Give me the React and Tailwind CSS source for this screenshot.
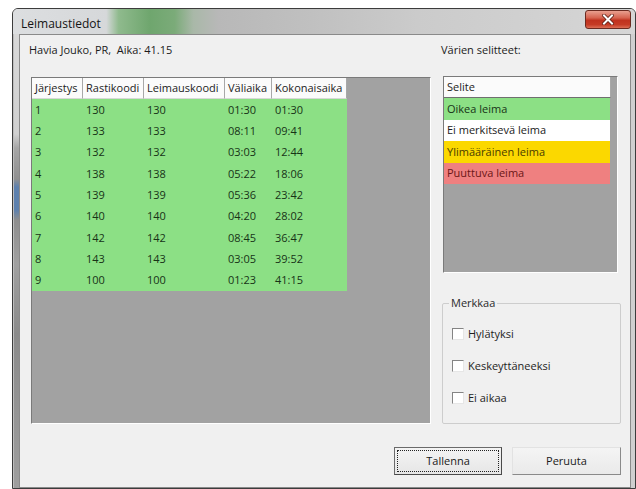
import React from "react";

const rows = [
  ["1", "130", "130", "01:30", "01:30"],
  ["2", "133", "133", "08:11", "09:41"],
  ["3", "132", "132", "03:03", "12:44"],
  ["4", "138", "138", "05:22", "18:06"],
  ["5", "139", "139", "05:36", "23:42"],
  ["6", "140", "140", "04:20", "28:02"],
  ["7", "142", "142", "08:45", "36:47"],
  ["8", "143", "143", "03:05", "39:52"],
  ["9", "100", "100", "01:23", "41:15"],
];

const columns = [
  { title: "Järjestys", w: "w-[51px]" },
  { title: "Rastikoodi", w: "w-[61px]" },
  { title: "Leimauskoodi", w: "w-[81px]" },
  { title: "Väliaika", w: "w-[47px]" },
  { title: "Kokonaisaika", w: "w-[75px]" },
];

const legend = [
  { label: "Oikea leima", cls: "bg-[#8ce085] text-[#173317]" },
  { label: "Ei merkitsevä leima", cls: "bg-white text-[#1a1a1a]" },
  { label: "Ylimääräinen leima", cls: "bg-[#fbd800] text-[#4a3c00]" },
  { label: "Puuttuva leima", cls: "bg-[#ef8080] text-[#6b1616]" },
];

function CloseButton() {
  return (
    <div className="mt-[1px] mr-[4px] w-[46px] h-[19px] rounded-[3px] border border-[#6b2a20] bg-[linear-gradient(180deg,#e9a090_0%,#d66450_40%,#c0321f_55%,#c53b25_80%,#dc6d55_100%)] flex items-center justify-center">
      <svg width="12" height="11" viewBox="0 0 12 11">
        <path d="M2 1.5 L10 9.5 M10 1.5 L2 9.5" stroke="#5a1c12" strokeWidth="3.6" strokeLinecap="square" />
        <path d="M2 1.5 L10 9.5 M10 1.5 L2 9.5" stroke="#ffffff" strokeWidth="2" strokeLinecap="square" />
      </svg>
    </div>
  );
}

function DataGrid() {
  return (
    <div className="w-[400px] h-[347px] border border-t-[#7a7a7a] border-l-[#7a7a7a] border-b-white border-r-white bg-[#a2a2a2]">
      <div className="flex h-[21px]">
        {columns.map((c) => (
          <div
            key={c.title}
            className={`${c.w} h-full bg-[#fbfbfb] border-r border-b border-r-[#a8a8a8] border-b-[#d8d8d8] pl-[3px] flex items-center text-[#1b1b1b] whitespace-nowrap overflow-hidden`}
          >
            {c.title}
          </div>
        ))}
      </div>
      <div className="w-[315px] h-[192px] grid grid-rows-9 bg-[#8ce085]">
        {rows.map((r) => (
          <div key={r[0]} className="flex items-center text-[#173317]">
            {r.map((v, i) => (
              <div key={i} className={`${columns[i].w} pl-[3px]`}>
                {v}
              </div>
            ))}
          </div>
        ))}
      </div>
    </div>
  );
}

function Legend() {
  return (
    <div className="ml-[2px] mt-[18px] w-[175px] h-[197px] border border-t-[#7a7a7a] border-l-[#7a7a7a] border-b-white border-r-white bg-[#a2a2a2]">
      <div className="w-[167px] h-[21px] bg-[#fbfbfb] border-r border-b border-r-[#a8a8a8] border-b-[#6f6f6f] pl-[3px] flex items-center text-[#1b1b1b]">
        Selite
      </div>
      {legend.map((l) => (
        <div key={l.label} className={`w-[166px] h-[21.5px] pl-[3px] flex items-center ${l.cls}`}>
          {l.label}
        </div>
      ))}
    </div>
  );
}

function CheckRow({ label }) {
  return (
    <div className="h-[16px] flex items-center">
      <div className="w-[12px] h-[12px] bg-white border border-t-[#848484] border-l-[#848484] border-b-[#e6e6e6] border-r-[#e6e6e6]" />
      <span className="ml-[4px] text-[#1e1e1e]">{label}</span>
    </div>
  );
}

function MarkGroup() {
  return (
    <fieldset className="ml-[1px] mt-[22px] w-[179px] h-[129px] border border-[#cdcdcd] rounded-[2px] pl-[9px]">
      <legend className="ml-[-3px] px-[2px] leading-[16px] text-[#2a2a2a]">Merkkaa</legend>
      <div className="pt-[15px] flex flex-col gap-[16px]">
        <CheckRow label="Hylätyksi" />
        <CheckRow label="Keskeyttäneeksi" />
        <CheckRow label="Ei aikaa" />
      </div>
    </fieldset>
  );
}

export default function App() {
  return (
    <div
      className="w-[636px] h-[489px] bg-white pt-[8px] pl-[12px] overflow-hidden text-[11px] leading-[16px]"
      style={{ fontFamily: '"Open Sans", "Noto Sans", sans-serif' }}
    >
      <div className="w-[624px] h-[481px] border border-[#3c3c3c] rounded-t-[6px] flex flex-col bg-[#d3d3d3] overflow-hidden">
        {/* title bar */}
        <div className="h-[25px] shrink-0 flex items-start justify-between bg-[linear-gradient(90deg,#dcdee0_0%,#d6d8da_15%,#8fba8d_17%,#6fa66e_22%,#7bab79_26%,#a9b8a8_29%,#b8b8b8_33%,#c0c0c0_48%,#cbcbcb_65%,#d6d6d6_100%)]">
          <span className="pl-[8px] pt-[7px] text-[12px] text-[#141414]">Leimaustiedot</span>
          <CloseButton />
        </div>
        {/* frame + client */}
        <div className="flex flex-1">
          <div className="w-[6px] h-full border-l border-l-[#bdbdbd] bg-[linear-gradient(180deg,#d8d8d8_0px,#d0d0d0_100px,#a6a6a6_114px,#909090_145px,#5d80ad_153px,#5d80ad_176px,#8e8e8e_186px,#a0a0a0_230px,#8a8a8a_300px,#9e9e9e_100%)]" />
          <div className="w-[612px] h-[454px] border border-[#8a8a8a] bg-[#f0f0f0] flex flex-col">
            <div className="flex pl-[11px] pt-[7px]">
              <div className="w-[400px] flex flex-col">
                <div className="ml-[-2px] h-[16px] text-[#1b1b1b]">Havia Jouko, PR,&nbsp; Aika: 41.15</div>
                <div className="mt-[19px]">
                  <DataGrid />
                </div>
              </div>
              <div className="ml-[10px] w-[182px] flex flex-col">
                <div className="h-[16px] text-[#1b1b1b]">Värien selitteet:</div>
                <Legend />
                <MarkGroup />
              </div>
            </div>
            <div className="flex justify-end pr-[9px] mt-[23px] gap-[10px]">
              <div className="w-[108px] h-[28px] border border-[#6a6a6a] border-b-[#4a4a4a] border-r-[#4a4a4a] bg-[linear-gradient(180deg,#f4f4f4,#e6e6e6)] p-[2px]">
                <div className="w-full h-full border border-dotted border-[#222] flex items-center justify-center text-[#1a1a1a]">
                  Tallenna
                </div>
              </div>
              <div className="w-[109px] h-[28px] border border-t-[#e2e2e2] border-l-[#e2e2e2] border-b-[#8a8a8a] border-r-[#8a8a8a] bg-[linear-gradient(180deg,#f4f4f4,#eaeaea)] flex items-center justify-center text-[#1a1a1a]">
                Peruuta
              </div>
            </div>
          </div>
          <div className="w-[4px] h-full bg-[#cfcfcf]" />
        </div>
      </div>
    </div>
  );
}
